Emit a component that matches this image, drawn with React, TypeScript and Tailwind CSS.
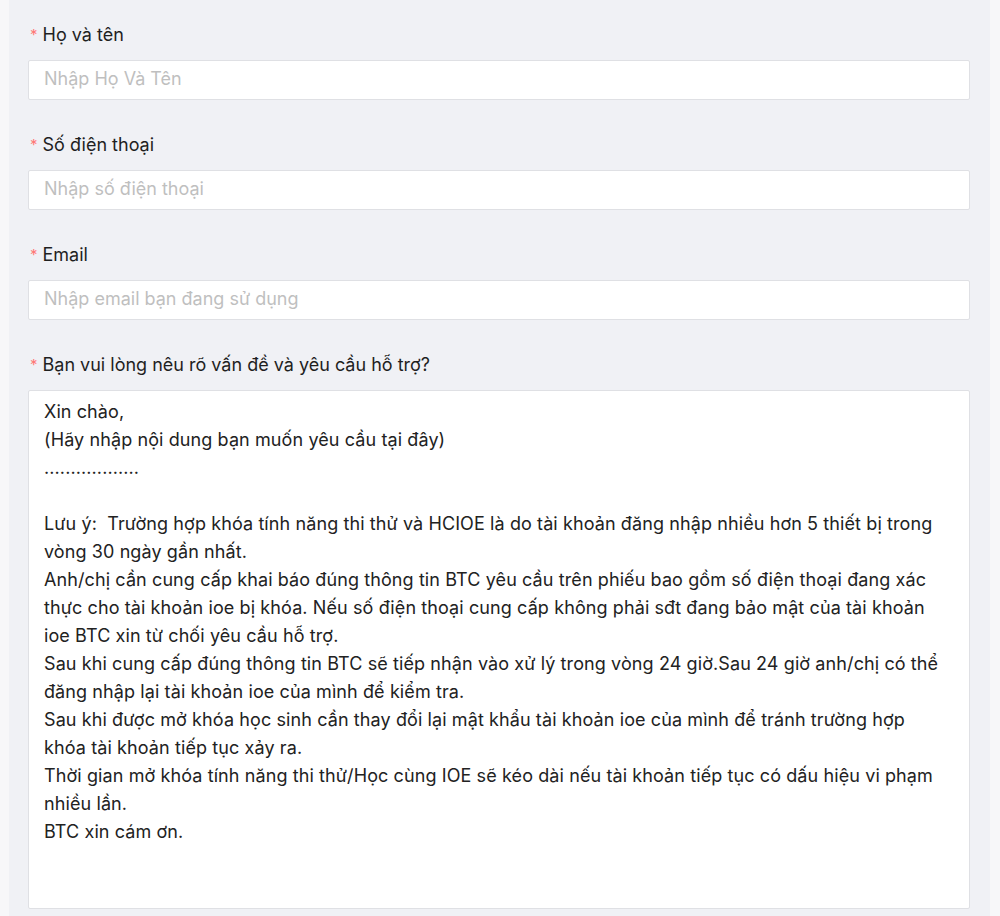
import React from "react";

const font = { fontFamily: "Inter, 'Noto Sans', sans-serif" };

function Label({ text }: { text: string }) {
  return (
    <div className="flex items-center h-6 text-[18px] text-[#1f1f1f]">
      <span className="text-[#ff7875] text-[15px] mr-[5px] ml-[2px] leading-none">*</span>
      <span>{text}</span>
    </div>
  );
}

function Input({ placeholder }: { placeholder: string }) {
  return (
    <div className="mt-[14px] h-10 bg-white border border-[#dfe0e4] rounded-[2px] flex items-center px-[15px] pb-[3px] text-[18px] text-[#bfbfbf]">
      {placeholder}
    </div>
  );
}

const lines = [
  "Xin chào,",
  "(Hãy nhập nội dung bạn muốn yêu cầu tại đây)",
  "..................",
  "",
  "Lưu ý:  Trường hợp khóa tính năng thi thử và HCIOE là do tài khoản đăng nhập nhiều hơn 5 thiết bị trong",
  "vòng 30 ngày gần nhất.",
  "Anh/chị cần cung cấp khai báo đúng thông tin BTC yêu cầu trên phiếu bao gồm số điện thoại đang xác",
  "thực cho tài khoản ioe bị khóa. Nếu số điện thoại cung cấp không phải sđt đang bảo mật của tài khoản",
  "ioe BTC xin từ chối yêu cầu hỗ trợ.",
  "Sau khi cung cấp đúng thông tin BTC sẽ tiếp nhận vào xử lý trong vòng 24 giờ.Sau 24 giờ anh/chị có thể",
  "đăng nhập lại tài khoản ioe của mình để kiểm tra.",
  "Sau khi được mở khóa học sinh cần thay đổi lại mật khẩu tài khoản ioe của mình để tránh trường hợp",
  "khóa tài khoản tiếp tục xảy ra.",
  "Thời gian mở khóa tính năng thi thử/Học cùng IOE sẽ kéo dài nếu tài khoản tiếp tục có dấu hiệu vi phạm",
  "nhiều lần.",
  "BTC xin cám ơn.",
];

export default function App() {
  return (
    <div className="w-[1000px] h-[916px] bg-[#f7f7f9] overflow-hidden" style={font}>
      <div className="ml-[9px] w-[981px] h-full bg-[#f0f1f5] pt-[22px] pl-[19px] pr-[20px]">
        <Label text="Họ và tên" />
        <Input placeholder="Nhập Họ Và Tên" />
        <div className="h-[32px]" />
        <Label text="Số điện thoại" />
        <Input placeholder="Nhập số điện thoại" />
        <div className="h-[32px]" />
        <Label text="Email" />
        <Input placeholder="Nhập email bạn đang sử dụng" />
        <div className="h-[32px]" />
        <Label text="Bạn vui lòng nêu rõ vấn đề và yêu cầu hỗ trợ?" />
        <div className="mt-[14px] h-[519px] bg-white border border-[#dfe0e4] rounded-[2px] pt-[7px] px-[15px] text-[18px] leading-[28px] tracking-[0.1px] text-[#222]">
          {lines.map((l, i) => (
            <div key={i} className="whitespace-pre h-[28px]">
              {l}
            </div>
          ))}
        </div>
      </div>
    </div>
  );
}
